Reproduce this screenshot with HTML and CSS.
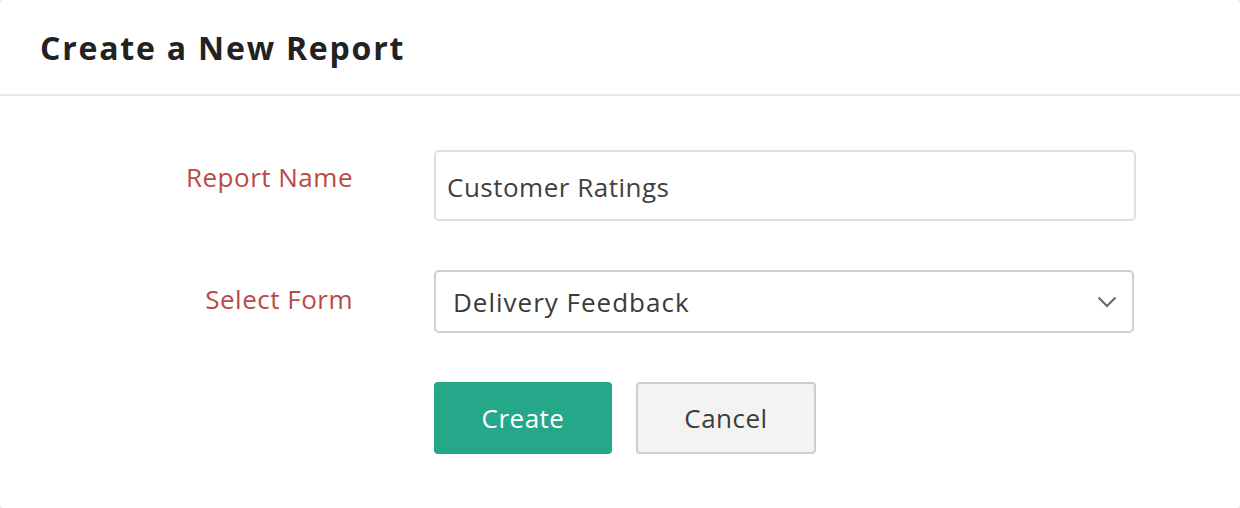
FILE: index.html
```html
<!DOCTYPE html>
<html>
<head>
<meta charset="utf-8">
<link rel="stylesheet" href="styles.css">
</head>
<body>
<div class="dialog">
  <div class="header"><h1 class="title">Create a New Report</h1></div>
  <form class="form">
    <label class="label label-name" for="rname">Report Name</label>
    <input id="rname" class="input" type="text" value="Customer Ratings">
    <label class="label label-form">Select Form</label>
    <div class="select">
      <span class="select-text">Delivery Feedback</span>
      <svg class="chevron" width="20" height="12" viewBox="0 0 20 12"><path d="M1.5 1.5 L10 10 L18.5 1.5" fill="none" stroke="#666" stroke-width="2"/></svg>
    </div>
    <div class="spacer"></div>
    <div class="actions">
      <button type="button" class="btn btn-primary">Create</button>
      <button type="button" class="btn btn-secondary">Cancel</button>
    </div>
  </form>
</div>
</body>
</html>
```
FILE: styles.css
```css
html, body { margin: 0; padding: 0; }
body {
  background: #e9e9e9;
  font-family: "Open Sans", Lato, sans-serif;
  width: 1240px;
  height: 508px;
}
.dialog {
  background: #fff;
  height: 508px;
  border-radius: 4px;
  box-sizing: border-box;
}
.header {
  height: 94px;
  border-bottom: 2px solid #e8e8e8;
  box-sizing: content-box;
  padding-left: 40px;
  display: flex;
  align-items: center;
}
.title {
  margin: 0;
  font-size: 32px;
  font-weight: 700;
  color: #222;
  letter-spacing: 1.8px;
}
.form {
  display: grid;
  grid-template-columns: 353px 702px;
  column-gap: 81px;
  padding-top: 54px;
}
.label {
  text-align: right;
  color: #b94a48;
  font-size: 26px;
  letter-spacing: 0.5px;
  line-height: 36px;
}
.label-name { padding-top: 9px; }
.label-form { padding-top: 11px; margin-top: 49px; }
.input {
  height: 71px;
  box-sizing: border-box;
  border: 2px solid #e0e0e0;
  border-radius: 5px;
  padding: 2px 11px 0;
  font-family: inherit;
  font-size: 26px;
  letter-spacing: 0.5px;
  color: #3f3f3f;
  outline: none;
}
.select {
  margin-top: 49px;
  width: 700px;
  height: 63px;
  box-sizing: border-box;
  border: 2px solid #cfcfcf;
  border-radius: 5px;
  display: flex;
  align-items: center;
  justify-content: space-between;
  padding: 0 15px 0 17px;
}
.select-text { font-size: 26px; letter-spacing: 1px; color: #3a3a3a; }
.chevron { display: block; }
.actions {
  margin-top: 49px;
  display: flex;
  gap: 24px;
}
.btn {
  height: 72px;
  box-sizing: border-box;
  border-radius: 4px;
  font-family: inherit;
  font-size: 26px;
  letter-spacing: 0.5px;
  padding: 0;
  cursor: pointer;
}
.btn-primary {
  width: 178px;
  background: #25a88a;
  color: #fff;
  border: none;
}
.btn-secondary {
  width: 180px;
  background: #f3f3f3;
  color: #3c3c3c;
  border: 2px solid #cdcdcd;
}
```
